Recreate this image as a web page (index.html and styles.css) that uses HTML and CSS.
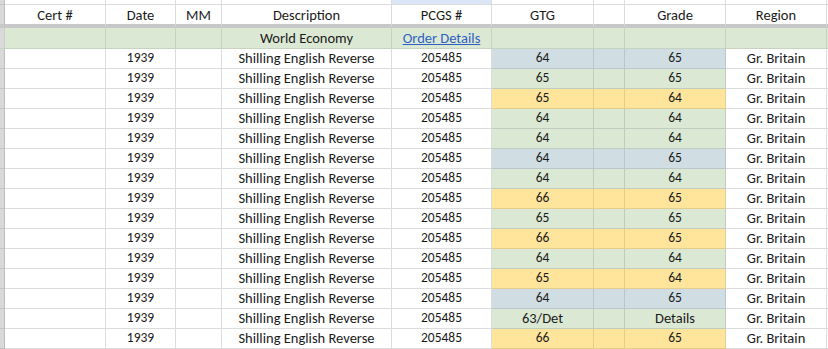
FILE: index.html
```html
<!DOCTYPE html>
<html>
<head>
<meta charset="utf-8">
<link rel="stylesheet" href="styles.css">
</head>
<body>
<div class="sheet">
  <div class="row top">
    <div class="c s"></div><div class="c w1"></div><div class="c w2"></div><div class="c w3"></div><div class="c w4"></div><div class="c w5 sel"></div><div class="c w6"></div><div class="c w7"></div><div class="c w8"></div><div class="c w9"></div><div class="c x"></div>
  </div>
  <div class="row head">
    <div class="c s"></div><div class="c w1">Cert #</div><div class="c w2">Date</div><div class="c w3">MM</div><div class="c w4">Description</div><div class="c w5">PCGS #</div><div class="c w6">GTG</div><div class="c w7"></div><div class="c w8">Grade</div><div class="c w9">Region</div><div class="c x"></div>
  </div>
  <div class="row grp">
    <div class="c s"></div><div class="c w1"></div><div class="c w2"></div><div class="c w3"></div><div class="c w4">World Economy</div><div class="c w5"><span class="link">Order Details</span></div><div class="c w6"></div><div class="c w7"></div><div class="c w8"></div><div class="c w9"></div><div class="c x"></div>
  </div>
  <div id="rows"></div>
</div>
<script src="app.js"></script>
</body>
</html>
```
FILE: app.js
```js
const data = [
  ["64","65","b"],["65","65","g"],["65","64","o"],["64","64","g"],["64","64","g"],
  ["64","65","b"],["64","64","g"],["66","65","o"],["65","65","g"],["66","65","o"],
  ["64","64","g"],["65","64","o"],["64","65","b"],["63/Det","Details","g"],["66","65","o"]
];
const num = v => /^\d+$/.test(v) ? " n" : "";
const host = document.getElementById("rows");
host.outerHTML = data.map(([gtg, grade, k]) =>
  `<div class="row">` +
  `<div class="c s"></div><div class="c w1"></div><div class="c w2 n">1939</div><div class="c w3"></div>` +
  `<div class="c w4">Shilling English Reverse</div><div class="c w5 n">205485</div>` +
  `<div class="c w6${num(gtg)} ${k}">${gtg}</div><div class="c w7 ${k}"></div><div class="c w8${num(grade)} ${k}">${grade}</div>` +
  `<div class="c w9">Gr. Britain</div><div class="c x"></div></div>`
).join("");
```
FILE: styles.css
```css
html, body { margin: 0; padding: 0; background: #fff; }
body { font-family: Carlito, Lato, "Noto Sans", sans-serif; font-size: 14.5px; color: #1a1a1a; }
.sheet { width: 828px; overflow: hidden; }
.row { display: flex; height: 20px; }
.c {
  box-sizing: border-box; flex: none; height: 100%;
  border-right: 1px solid #dcdcdc; border-bottom: 1px solid #dcdcdc;
  display: flex; align-items: flex-end; justify-content: center;
  padding-bottom: 2px; line-height: 16px; white-space: nowrap; overflow: hidden;
}
.n { font-size: 13.5px; }
.s { width: 5px; background: #d9d9d9; border-right-color: #bdbdbd; border-bottom-color: #c4c4c4; }
.w1 { width: 101px; }
.w2 { width: 70px; }
.w3 { width: 46px; }
.w4 { width: 170px; }
.w5 { width: 100px; }
.w6 { width: 102px; }
.w7 { width: 31px; }
.w8 { width: 101px; }
.w9 { width: 101px; }
.x { width: 1px; border-right: none; }
.top { height: 5px; }
.top .c { padding: 0; }
.sel { background: #dae5f5; }
.head { height: 23px; }
.head .c { border-bottom: 4px solid #c8c8c8; padding-bottom: 1px; }
.grp { height: 21px; }
.grp .c { background: #dbe9d4; border-color: #c7d3c1; }
.grp .s { background: #d9d9d9; }
.link { color: #2f5fc4; text-decoration: underline; }
.g { background: #dbe9d4; border-color: #c0ccbd; }
.b { background: #d0dee3; border-color: #b9c6ca; }
.o { background: #ffe49c; border-color: #e6cd8c; }
```
